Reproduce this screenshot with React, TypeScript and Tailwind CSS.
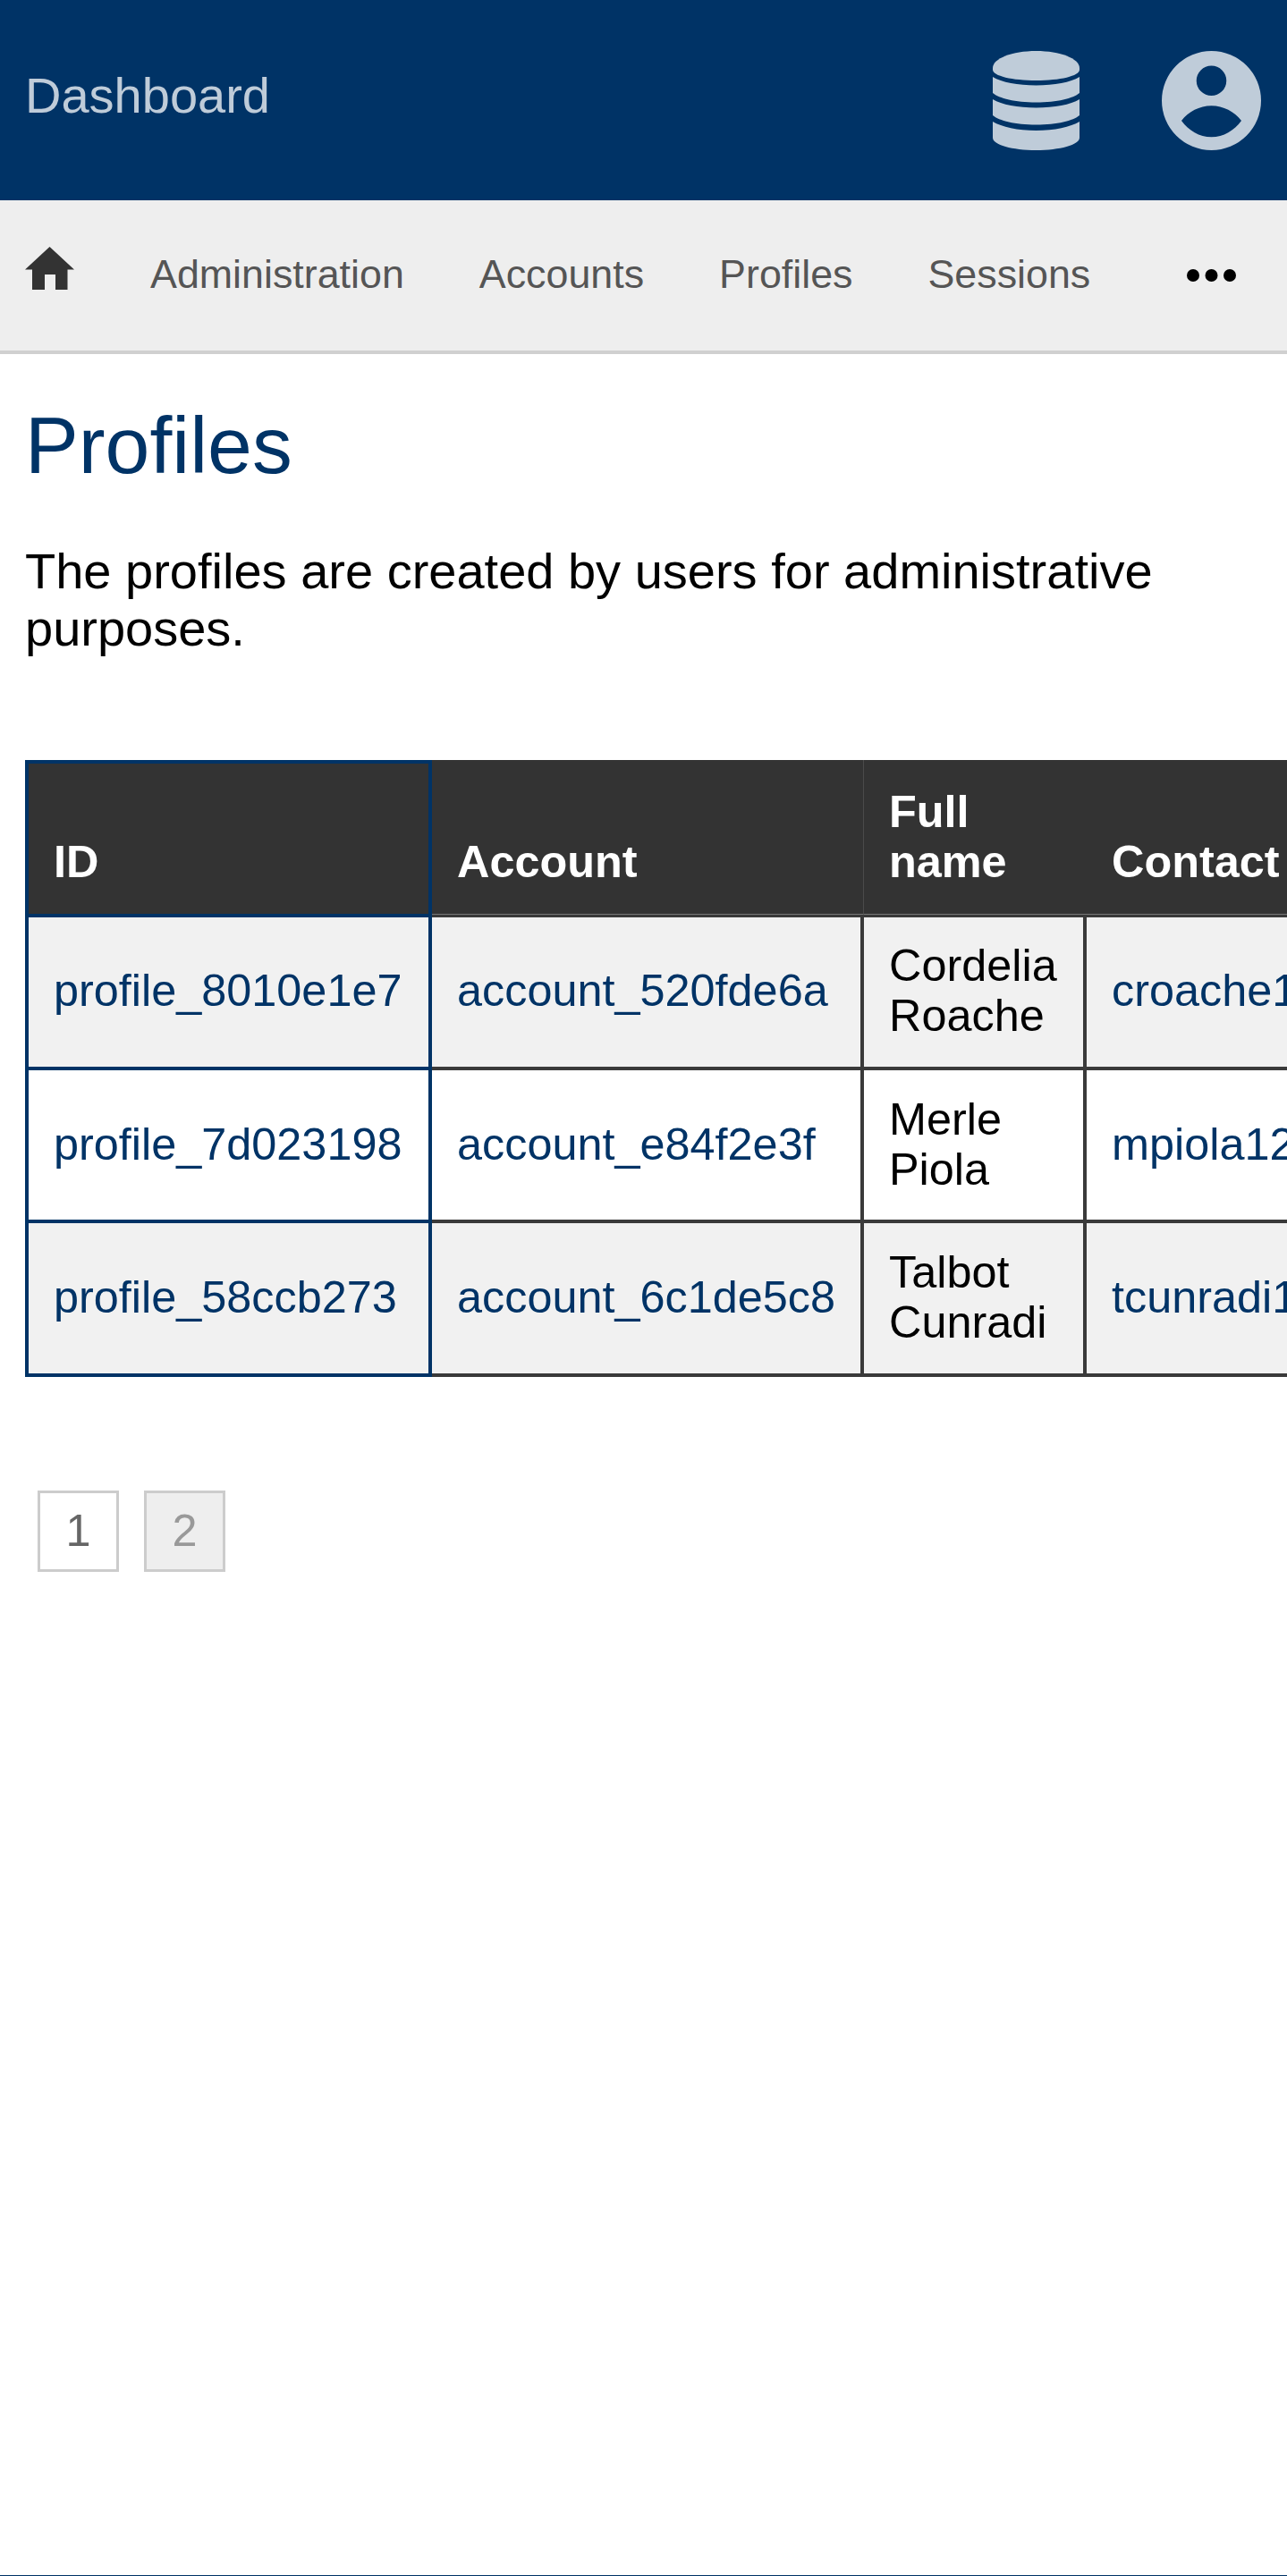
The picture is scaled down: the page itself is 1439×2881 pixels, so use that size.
import React from "react";

const rows = [
  { id: "profile_8010e1e7", account: "account_520fde6a", name: "Cordelia Roache", contact: "croache1@example.com", bg: "bg-[#f1f1f1]", cell: "h-[174px] border-t-[3px] pb-[4px]" },
  { id: "profile_7d023198", account: "account_e84f2e3f", name: "Merle Piola", contact: "mpiola12@example.com", bg: "bg-white", cell: "h-[171px] pb-[2px]" },
  { id: "profile_58ccb273", account: "account_6c1de5c8", name: "Talbot Cunradi", contact: "tcunradi1@example.com", bg: "bg-[#f1f1f1]", cell: "h-[172px] pb-[2px]" },
];

function HomeIcon() {
  return (
    <svg viewBox="0 0 55 48" className="w-[55px] h-[48px] block mb-[16px]" fill="#333333">
      <path d="M27.5 0 L55 25.5 H47.5 V48 H34 V31 H22 V48 H8 V25.5 H0 Z" />
    </svg>
  );
}

function DatabaseIcon() {
  return (
    <svg viewBox="0 0 97 111" className="w-[97px] h-[111px] block" fill="#bfccd9">
      <path d="M0 19 C0 8.5 21.7 0 48.5 0 S97 8.5 97 19 V21 C97 28 75 33 48.5 33 S0 28 0 21 Z" />
      <path d="M0 29 C10 35 28 38.5 48.5 38.5 S87 35 97 29 V47 C90 53 72 57.5 48.5 57.5 S7 53 0 47 Z" />
      <path d="M0 54 C10 60 28 63.5 48.5 63.5 S87 60 97 54 V72 C90 78 72 82.5 48.5 82.5 S7 78 0 72 Z" />
      <path d="M0 79 C10 85 28 89 48.5 89 S87 85 97 79 V97 C97 105 75 111 48.5 111 S0 105 0 97 Z" />
    </svg>
  );
}

function UserIcon() {
  return (
    <svg viewBox="0 0 111 111" className="w-[111px] h-[111px] block" fill="#bfccd9" fillRule="evenodd">
      <path d="M55.5 0 A55.5 55.5 0 1 1 55.5 111 A55.5 55.5 0 1 1 55.5 0 Z M55.5 16.5 A16.7 16.7 0 1 0 55.5 50 A16.7 16.7 0 1 0 55.5 16.5 Z M22 78 C30 68 42 61.3 55.5 61.3 S81 68 89 78 C81 89 69 96.3 55.5 96.3 S30 89 22 78 Z" />
    </svg>
  );
}

function DotsIcon() {
  return (
    <svg viewBox="0 0 55 14" className="w-[55px] h-[14px] block" fill="#000000">
      <circle cx="7" cy="7" r="7" />
      <circle cx="27.5" cy="7" r="7" />
      <circle cx="48" cy="7" r="7" />
    </svg>
  );
}

export default function App() {
  return (
    <div className="h-[2881px] flex flex-col overflow-hidden bg-white font-['Liberation_Sans',Arial,sans-serif]">
      <header className="h-[224px] shrink-0 bg-[#003366] flex items-center pl-[28px] pr-[29px]">
        <span className="text-[56px] leading-[64px] text-[#bfccd9] -mt-[10px]">Dashboard</span>
        <div className="ml-auto flex items-center gap-[92px]">
          <DatabaseIcon />
          <UserIcon />
        </div>
      </header>

      <nav className="h-[172px] shrink-0 bg-[#eeeeee] border-b-4 border-[#d0d0d0] flex items-center pl-[28px] pr-[57px] text-[44.8px] leading-[52px] text-[#555555]">
        <HomeIcon />
        <div className="flex items-center gap-[84px] ml-[85px] mb-[4px]">
          <span>Administration</span>
          <span>Accounts</span>
          <span>Profiles</span>
          <span>Sessions</span>
        </div>
        <div className="ml-auto">
          <DotsIcon />
        </div>
      </nav>

      <main className="flex flex-col items-start pl-[28px]">
        <h1 className="text-[89.6px] leading-[100px] text-[#003366] mt-[52px]">Profiles</h1>
        <p className="text-[56px] leading-[64px] text-black mt-[59px] w-[1300px]">
          The profiles are created by users for administrative purposes.
        </p>
        <div className="mt-[115px] w-[1411px] overflow-hidden">
          <table className="table-fixed w-[1800px] border-separate border-spacing-0 text-[50.4px] leading-[56px]">
            <colgroup>
              <col className="w-[455px]" />
              <col className="w-[483px]" />
              <col className="w-[249px]" />
              <col className="w-[613px]" />
            </colgroup>
            <thead>
              <tr className="bg-[#333333] text-white font-bold align-bottom text-left">
                <th className="px-[28px] pt-[26px] pb-[30px] border-l-4 border-t-4 border-r-4 border-b border-[#003366]">ID</th>
                <th className="px-[28px] pt-[30px] pb-[30px] border-r border-b border-r-[#4a4a4a] border-b-[#777777]">Account</th>
                <th className="px-[28px] pt-[30px] pb-[30px] border-b border-[#777777]">Full name</th>
                <th className="px-[28px] pt-[30px] pb-[30px] border-b border-[#777777]">Contact</th>
              </tr>
            </thead>
            <tbody>
              {rows.map((r) => (
                <tr key={r.id} className={r.bg}>
                  <td className={`${r.cell} px-[28px] align-middle border-l-4 border-r-4 border-b-4 border-[#003366]`}>
                    <a className="text-[#003366]">{r.id}</a>
                  </td>
                  <td className={`${r.cell} px-[28px] align-middle border-r-4 border-b-4 border-[#3a3a3a]`}>
                    <a className="text-[#003366]">{r.account}</a>
                  </td>
                  <td className={`${r.cell} px-[28px] align-middle border-r-4 border-b-4 border-[#3a3a3a] text-black`}>
                    {r.name}
                  </td>
                  <td className={`${r.cell} px-[28px] align-middle border-b-4 border-[#3a3a3a] whitespace-nowrap`}>
                    <a className="text-[#003366]">{r.contact}</a>
                  </td>
                </tr>
              ))}
            </tbody>
          </table>
        </div>
        <div className="mt-[127px] ml-[14px] flex gap-[28px] text-[50.4px] leading-none">
          <span className="w-[91px] h-[91px] flex items-center justify-center border-[3px] border-[#cccccc] bg-white text-[#666666]">1</span>
          <span className="w-[91px] h-[91px] flex items-center justify-center border-[3px] border-[#cccccc] bg-[#eeeeee] text-[#999999]">2</span>
        </div>
      </main>

      <div className="mt-auto h-px shrink-0 bg-[#003366]" />
    </div>
  );
}
